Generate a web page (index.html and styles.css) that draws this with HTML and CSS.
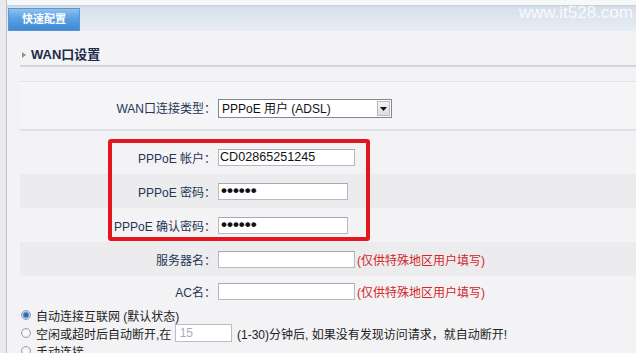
FILE: index.html
```html
<!DOCTYPE html>
<html lang="zh-CN">
<head>
<meta charset="utf-8">
<title>快速配置</title>
<link rel="stylesheet" href="styles.css">
</head>
<body>
<div class="page">
  <div class="topbar">
    <div class="tab">快速配置</div>
    <div class="watermark">www.it528.com</div>
  </div>
  <div class="content">
    <h2 class="heading"><span class="tri"></span>WAN口设置</h2>
    <div class="form">
      <div class="row row-type">
        <label class="lbl">WAN口连接类型：</label>
        <div class="select-wrap">
          <select class="select"><option>PPPoE 用户 (ADSL)</option></select>
          <span class="select-btn"><svg width="7" height="4" viewBox="0 0 7 4"><path d="M0 0H7L3.5 4Z" fill="#111"/></svg></span>
        </div>
      </div>
      <div class="row row-first">
        <label class="lbl">PPPoE 帐户：</label>
        <input class="field w137" type="text" value="CD02865251245">
      </div>
      <div class="row band">
        <label class="lbl">PPPoE 密码：</label>
        <input class="field pw w130" type="password" value="123456">
      </div>
      <div class="row">
        <label class="lbl">PPPoE 确认密码：</label>
        <input class="field pw w130" type="password" value="123456">
      </div>
      <div class="row band">
        <label class="lbl">服务器名：</label>
        <input class="field w137" type="text" value="">
        <span class="hint">(仅供特殊地区用户填写)</span>
      </div>
      <div class="row row-last">
        <label class="lbl">AC名：</label>
        <input class="field w137" type="text" value="">
        <span class="hint">(仅供特殊地区用户填写)</span>
      </div>
      <div class="redbox"></div>
      <div class="radios">
        <label class="opt"><input class="radio" type="radio" name="mode" checked>自动连接互联网 (默认状态)</label>
        <label class="opt"><input class="radio" type="radio" name="mode">空闲或超时后自动断开,在 <input class="mins" type="text" value="15"> (1-30)分钟后, 如果没有发现访问请求，就自动断开!</label>
        <label class="opt"><input class="radio" type="radio" name="mode">手动连接</label>
      </div>
    </div>
  </div>
</div>
</body>
</html>
```

FILE: styles.css
```css
html, body {
  margin: 0;
  padding: 0;
}
body {
  background: #e9eaec;
  font-family: "Liberation Sans", "Noto Sans CJK SC", sans-serif;
  font-size: 12px;
  color: #222;
  overflow: hidden;
}
.page {
  margin-left: 6px;
  border-left: 1px solid #b9c1ca;
  background: #f3f3f5;
  min-height: 353px;
  padding-top: 0;
}
.topbar {
  display: flex;
  align-items: flex-end;
  height: 31px;
  box-sizing: border-box;
  padding-top: 6px;
  background: linear-gradient(#f6f8fa 0, #f6f8fa 5px, #c9d3de 5px, #c9d3de 6px, #d6e0eb 7px, #e6ecf3 30px, #e9edf2 31px);
  padding-left: 1px;
}
.tab {
  width: 72px;
  height: 23px;
  box-sizing: border-box;
  border: 1px solid #5a97d2;
  background: linear-gradient(#8cc2f1, #5aa0e2 45%, #3f88d3);
  color: #fff;
  font-weight: bold;
  font-size: 11px;
  line-height: 21px;
  text-align: center;
}
.watermark {
  margin-left: auto;
  align-self: center;
  margin-top: -12px;
  padding-right: 3px;
  font-family: "Liberation Sans", sans-serif;
  font-size: 17px;
  color: rgba(255, 255, 255, 0.85);
}
.content {
  padding-left: 13px;
}
.heading {
  margin: 14px 0 14px;
  height: 20px;
  line-height: 20px;
  border-bottom: 2px solid #d2d7dc;
  font-size: 13px;
  font-weight: bold;
  color: #1d2b4a;
  display: flex;
  align-items: center;
}
.tri {
  width: 0;
  height: 0;
  border-left: 4px solid #8a9199;
  border-top: 3px solid transparent;
  border-bottom: 3px solid transparent;
  margin: 0 5px 0 2px;
}
.form {
  position: relative;
  border-top: 1px solid #e1e5ea;
}
.row {
  display: flex;
  align-items: center;
  height: 34px;
}
.row-type {
  height: 49px;
  box-sizing: border-box;
  align-items: flex-start;
  padding-top: 17px;
  border-bottom: 2px solid #dce2e8;
  background: #f5f5f7;
}
.row-first {
  margin-top: 9px;
}
.row-last {
  height: 30px;
}
.band {
  background: #ececee;
}
.lbl {
  width: 196px;
  margin-right: 2px;
  text-align: right;
  font-size: 12px;
  color: #263454;
  white-space: nowrap;
}
.select-wrap {
  position: relative;
  width: 174px;
  height: 19px;
}
.select {
  appearance: none;
  -webkit-appearance: none;
  width: 100%;
  height: 19px;
  margin: 0;
  border: 1px solid #7f8890;
  border-radius: 0;
  background: #fff;
  padding: 0 0 0 3px;
  font-family: "Liberation Sans", "Noto Sans CJK SC", sans-serif;
  font-size: 12px;
  color: #111;
}
.select-btn {
  position: absolute;
  right: 2px;
  top: 2px;
  width: 13px;
  height: 15px;
  box-sizing: border-box;
  border: 1px solid #b9bcc0;
  background: linear-gradient(#f4f4f4, #dcdcdc);
  display: flex;
  align-items: center;
  justify-content: center;
  pointer-events: none;
}
.field {
  height: 17px;
  box-sizing: border-box;
  margin: 0;
  border: 1px solid #b3bac2;
  border-top-color: #a3aab2;
  background: #fff;
  padding: 0 1px;
  font-family: "Liberation Sans", sans-serif;
  font-size: 12.6px;
  color: #111;
}
.w137 { width: 137px; }
.w130 { width: 130px; }
.pw {
  font-size: 17px;
  letter-spacing: 0;
  font-weight: bold;
  padding-left: 2px;
}
.hint {
  margin-left: 2px;
  font-size: 12px;
  color: #d3262b;
  white-space: nowrap;
}
.redbox {
  position: absolute;
  left: 88px;
  top: 57px;
  width: 262px;
  height: 102px;
  box-sizing: border-box;
  border: 4px solid #e3161f;
  border-radius: 3px;
}
.radios {
  display: flex;
  flex-direction: column;
}
.opt {
  display: flex;
  align-items: center;
  height: 18px;
  font-size: 12px;
  color: #222;
  white-space: pre;
}
.radio {
  appearance: none;
  -webkit-appearance: none;
  width: 10px;
  height: 10px;
  margin: 0 5px 0 1px;
  border: 1px solid #9aa2ab;
  border-radius: 50%;
  background: radial-gradient(circle, #ffffff, #e3e6ea);
  flex: none;
}
.radio:checked {
  background: radial-gradient(circle, #1f63b4 0, #2f74c4 2px, #a9c8ea 3.5px, #f4f7fb 4.5px);
}
.mins {
  width: 57px;
  height: 18px;
  box-sizing: border-box;
  margin: 0 2px 0 0;
  border: 1px solid #b8bec5;
  background: #fff;
  padding: 0 4px;
  font-family: "Liberation Sans", sans-serif;
  font-size: 12px;
  color: #a8adb3;
}
```
